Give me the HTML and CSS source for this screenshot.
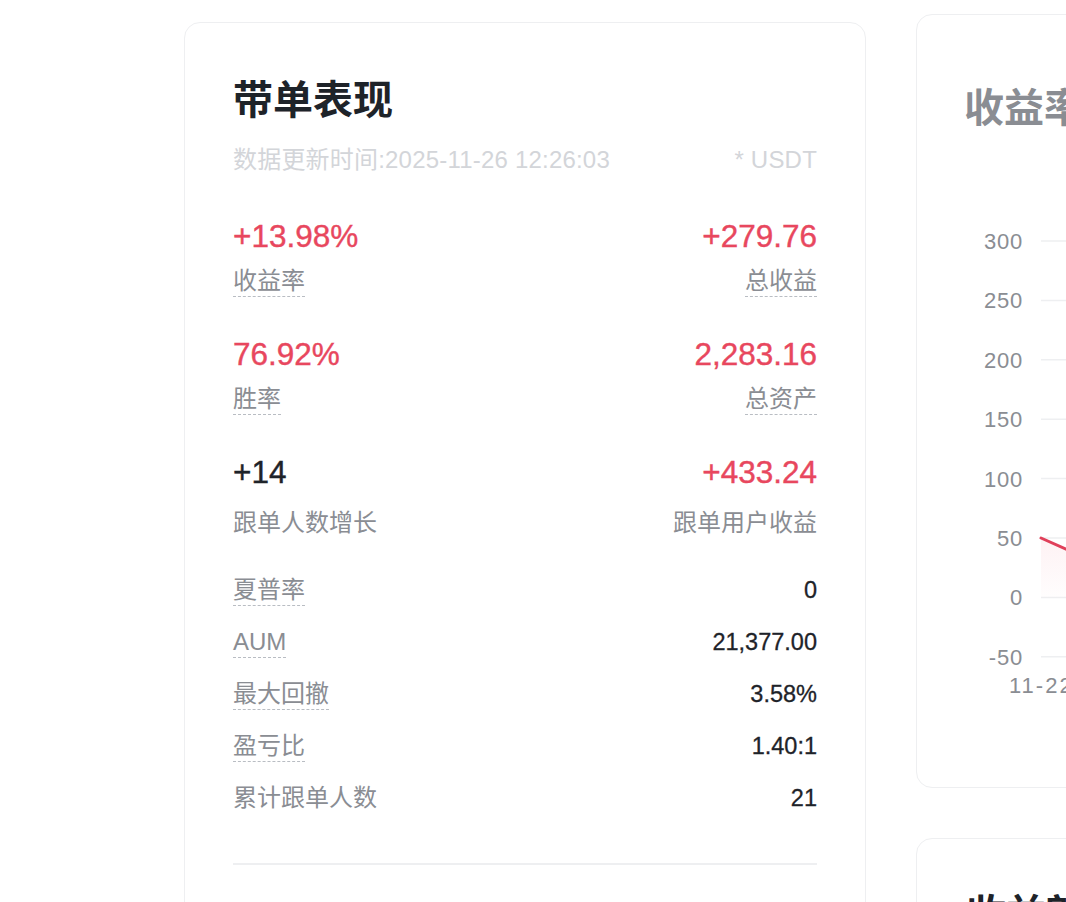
FILE: index.html
```html
<!DOCTYPE html>
<html lang="zh-CN">
<head>
<meta charset="utf-8">
<title>带单表现</title>
<link rel="stylesheet" href="styles.css">
</head>
<body>
<div class="page">
  <section class="card perf">
    <h1 class="title">带单表现</h1>
    <div class="meta">
      <span>数据更新时间:2025-11-26 12:26:03</span>
      <span>* USDT</span>
    </div>

    <div class="big-row">
      <div class="cell">
        <div class="val red">+13.98%</div>
        <div class="lbl"><span class="dash">收益率</span></div>
      </div>
      <div class="cell right">
        <div class="val red">+279.76</div>
        <div class="lbl"><span class="dash">总收益</span></div>
      </div>
    </div>

    <div class="big-row">
      <div class="cell">
        <div class="val red">76.92%</div>
        <div class="lbl"><span class="dash">胜率</span></div>
      </div>
      <div class="cell right">
        <div class="val red">2,283.16</div>
        <div class="lbl"><span class="dash">总资产</span></div>
      </div>
    </div>

    <div class="big-row">
      <div class="cell">
        <div class="val">+14</div>
        <div class="lbl plain"><span>跟单人数增长</span></div>
      </div>
      <div class="cell right">
        <div class="val red">+433.24</div>
        <div class="lbl plain"><span>跟单用户收益</span></div>
      </div>
    </div>

    <div class="list">
      <div class="item"><span class="dash">夏普率</span><span class="num">0</span></div>
      <div class="item"><span class="dash">AUM</span><span class="num">21,377.00</span></div>
      <div class="item"><span class="dash">最大回撤</span><span class="num">3.58%</span></div>
      <div class="item"><span class="dash">盈亏比</span><span class="num">1.40:1</span></div>
      <div class="item"><span class="ldash">累计跟单人数</span><span class="num">21</span></div>
    </div>

    <div class="divider"></div>
  </section>

  <div class="side">
    <section class="card chart-card">
      <h2 class="title muted">收益率</h2>
      <svg class="chart" width="682" height="560" viewBox="0 0 682 560">
        <defs>
          <linearGradient id="fill" x1="0" y1="0" x2="0" y2="1">
            <stop offset="0" stop-color="#f0465d" stop-opacity="0.07"/>
            <stop offset="1" stop-color="#f0465d" stop-opacity="0.01"/>
          </linearGradient>
        </defs>
        <g class="grid">
          <line x1="124" y1="99" x2="682" y2="99"/>
          <line x1="124" y1="158.4" x2="682" y2="158.4"/>
          <line x1="124" y1="217.8" x2="682" y2="217.8"/>
          <line x1="124" y1="277.2" x2="682" y2="277.2"/>
          <line x1="124" y1="336.6" x2="682" y2="336.6"/>
          <line x1="124" y1="396" x2="682" y2="396"/>
          <line x1="124" y1="455.4" x2="682" y2="455.4"/>
          <line x1="124" y1="514.8" x2="682" y2="514.8"/>
        </g>
        <g class="ylab">
          <text x="106" y="107">300</text>
          <text x="106" y="166.4">250</text>
          <text x="106" y="225.8">200</text>
          <text x="106" y="285.2">150</text>
          <text x="106" y="344.6">100</text>
          <text x="106" y="404">50</text>
          <text x="106" y="463.4">0</text>
          <text x="106" y="522.8">-50</text>
        </g>
        <path d="M124 396 L160 412 L160 455.4 L124 455.4 Z" fill="url(#fill)"/>
        <path d="M124 396 L160 412" class="series"/>
        <text class="xlab" x="92" y="551">11-22</text>
      </svg>
    </section>
    <section class="card chart-card second">
      <h2 class="title">收益额</h2>
    </section>
  </div>
</div>
</body>
</html>
```

FILE: styles.css
```css
* { box-sizing: border-box; }

html, body {
  margin: 0;
  padding: 0;
  background: #ffffff;
  overflow: hidden;
}

body {
  font-family: "Liberation Sans", "Noto Sans CJK SC", sans-serif;
  color: #1e2329;
  width: 1066px;
  height: 902px;
}

.page {
  display: flex;
  align-items: flex-start;
  gap: 50px;
  padding: 14px 0 0 184px;
  width: 1600px;
}

.card {
  width: 682px;
  border: 1px solid #eeeff1;
  border-radius: 16px;
  background: #fff;
  flex-shrink: 0;
}

.perf {
  margin-top: 8px;
  padding: 49px 48px 60px 48px;
  height: 1000px;
}

.title {
  margin: 0;
  font-size: 40px;
  line-height: 56px;
  font-weight: 700;
  color: #1e2329;
}

.title.muted {
  color: #8a8d93;
}

.meta {
  display: flex;
  justify-content: space-between;
  margin-top: 15px;
  font-size: 24px;
  line-height: 34px;
  color: #d3d5d9;
  letter-spacing: 0.2px;
}

.big-row {
  display: flex;
  justify-content: space-between;
  margin-top: 35px;
}

.meta + .big-row { margin-top: 37px; }

.cell {
  display: flex;
  flex-direction: column;
  align-items: flex-start;
}

.cell.right { align-items: flex-end; }

.val {
  font-size: 31.5px;
  line-height: 44px;
  font-weight: 500;
  color: #1e2329;
  -webkit-text-stroke: 0.4px currentColor;
}

.val.red { color: #e8475e; }

.lbl {
  margin-top: 8px;
  font-size: 24px;
  line-height: 30px;
  color: #8a8d93;
}

.lbl.plain { margin-top: 14px; }

.dash {
  display: inline-block;
  line-height: 30px;
  border-bottom: 1.5px dashed #b9bdc3;
}

.ldash {
  display: inline-block;
  line-height: 30px;
  border-bottom: 1.5px solid transparent;
}

.list {
  margin-top: 26px;
  display: flex;
  flex-direction: column;
}

.item {
  display: flex;
  justify-content: space-between;
  align-items: center;
  height: 52px;
  font-size: 24px;
  color: #8a8d93;
}

.num {
  font-size: 23.5px;
  font-weight: 500;
  color: #1e2329;
  -webkit-text-stroke: 0.3px currentColor;
}

.divider {
  margin-top: 39px;
  height: 2px;
  background: #eeeff1;
}

.side {
  display: flex;
  flex-direction: column;
  gap: 50px;
}

.chart-card {
  padding: 65px 48px 0 47px;
  height: 774px;
  position: relative;
}

.chart {
  position: absolute;
  left: 0;
  top: 127px;
}

.grid line {
  stroke: #eeeff1;
  stroke-width: 1.5;
}

.ylab text {
  font-family: "Liberation Sans", sans-serif;
  font-size: 22px;
  letter-spacing: 0.8px;
  fill: #8a8d93;
  text-anchor: end;
}

.xlab {
  font-family: "Liberation Sans", sans-serif;
  font-size: 22px;
  letter-spacing: 2px;
  fill: #8a8d93;
}

.series {
  fill: none;
  stroke: #e0405a;
  stroke-width: 3;
  stroke-linecap: round;
}

.second {
  height: 400px;
  padding: 47px 48px 0 49px;
}
```
